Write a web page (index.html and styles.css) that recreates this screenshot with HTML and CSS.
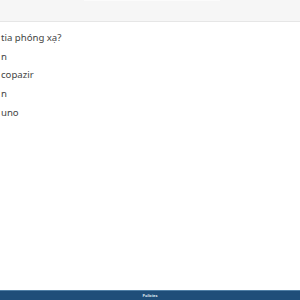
FILE: index.html
```html
<!DOCTYPE html>
<html lang="vi">
<head>
    <meta charset="UTF-8">
    <meta name="viewport" content="width=device-width, initial-scale=1.0">
    <title>Quiz</title>
    <link rel="stylesheet" href="styles.css">
</head>
<body>
    <div class="page">
        <div class="top-bar">
            <div class="top-edge"></div>
        </div>

        <div class="quiz">
            <div class="question">tia phóng xạ?</div>
            <div class="answers">
                <div class="answer">n</div>
                <div class="answer">copazir</div>
                <div class="answer">n</div>
                <div class="answer">uno</div>
            </div>
        </div>

        <div class="footer">
            <span class="footer-text">Policies</span>
        </div>
    </div>
</body>
</html>
```

FILE: styles.css
```css
* {
    margin: 0;
    padding: 0;
    box-sizing: border-box;
}

body {
    background-color: #ffffff;
    color: #444444;
    font-family: 'Noto Sans', 'Open Sans', sans-serif;
    font-size: 9.6px;
    height: 300px;
    overflow: hidden;
}

.page {
    display: flex;
    flex-direction: column;
    height: 300px;
}

.top-bar {
    height: 22px;
    background-color: #f6f6f6;
    border-bottom: 1px solid #e6e6e6;
}

.top-edge {
    height: 1px;
    margin: 0 80px 0 84px;
    background-color: #fbfbfb;
}

.quiz {
    flex: 1;
    padding: 9px 0 0 1px;
}

.question {
    line-height: 14px;
    margin-bottom: 4.8px;
}

.answers {
    display: flex;
    flex-direction: column;
    gap: 4.6px;
}

.answer {
    line-height: 14px;
}

.footer {
    height: 10px;
    background-color: #1f4e79;
    border-top: 1px solid #4f7fa6;
    display: flex;
    align-items: center;
    justify-content: center;
}

.footer-text {
    color: #dfe8f0;
    font-size: 4px;
    font-weight: bold;
    line-height: 1;
}
```
